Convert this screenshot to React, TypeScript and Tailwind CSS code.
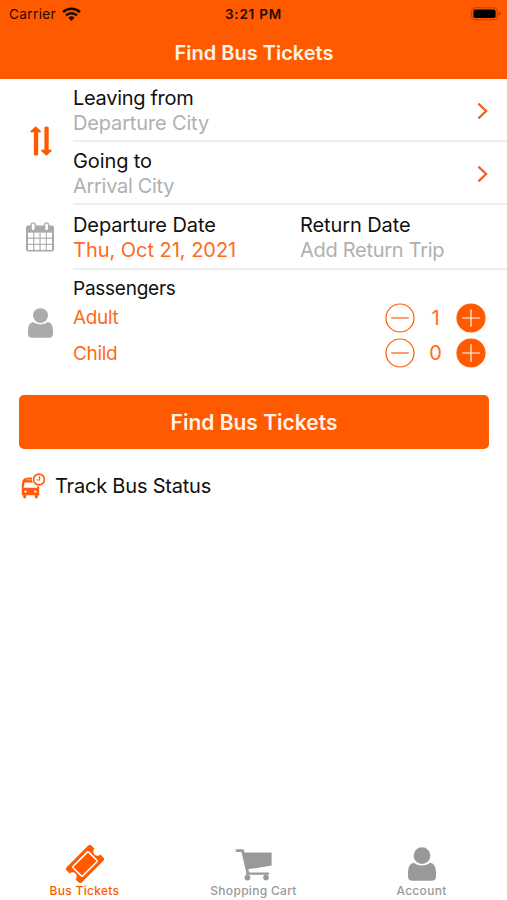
import type { ReactNode } from "react";

function WifiIcon() {
  return (
    <svg width="19" height="15" viewBox="0 0 19 15" fill="none" stroke="#1c0a00" strokeWidth="2.5">
      <path d="M1 5.2 A12.3 12.3 0 0 1 18 5.2" />
      <path d="M4 8.4 A8 8 0 0 1 15 8.4" />
      <path d="M6.4 10.8 A4.5 4.5 0 0 1 12.6 10.8 L9.5 14 Z" fill="#1c0a00" stroke="none" />
    </svg>
  );
}

function BatteryIcon() {
  return (
    <svg width="30" height="14" viewBox="0 0 30 14">
      <rect x="0.7" y="0.8" width="25.6" height="12" rx="3.4" fill="none" stroke="#b54000" strokeWidth="1" />
      <rect x="2.4" y="2.6" width="22.2" height="8.4" rx="1.8" fill="#000" />
      <path d="M27.8 4.8 Q29.6 5.2 29.6 6.8 Q29.6 8.4 27.8 8.8 Z" fill="#a83a00" />
    </svg>
  );
}

function SwapIcon() {
  return (
    <svg width="22" height="30" viewBox="0 0 22 30" fill="#ff5a00">
      <path d="M5.7 0.3 L10.9 5 Q11.2 6.8 9.6 6.6 L8.2 6.3 V28.4 Q8.2 29.6 6 29.6 Q3.9 29.6 3.9 28.4 V6.3 L2 6.6 Q0.2 6.8 0.5 5 Z" />
      <path d="M16.4 29.7 L11.2 25 Q10.9 23.2 12.5 23.4 L14.4 23.7 V1.6 Q14.4 0.4 16.6 0.4 Q18.7 0.4 18.7 1.6 V23.7 L20.1 23.4 Q21.9 23.2 21.6 25 Z" />
    </svg>
  );
}

function CalendarIcon() {
  return (
    <svg width="28" height="30" viewBox="0 0 28 30">
      <path d="M2 3.6 H26 Q28 3.6 28 5.6 V27.6 Q28 29.6 26 29.6 H2 Q0 29.6 0 27.6 V5.6 Q0 3.6 2 3.6 Z" fill="#aaa" />
      <g fill="#fff">
        {[10.6, 16.8, 22.9].map((y) =>
          [2, 8.3, 14.6, 20.8].map((x) => <rect key={`${x}-${y}`} x={x} y={y} width="5.2" height="5" />),
        )}
      </g>
      <g stroke="#aaa" strokeWidth="5.4" strokeLinecap="round">
        <path d="M7.2 3 V6" />
        <path d="M20.6 3 V6" />
      </g>
      <g stroke="#fff" strokeWidth="2.8" strokeLinecap="round">
        <path d="M7.2 3 V6.8" />
        <path d="M20.6 3 V6.8" />
      </g>
    </svg>
  );
}

function PersonIcon({ width, height, color }: { width: number; height: number; color: string }) {
  return (
    <svg width={width} height={height} viewBox="0 0 28 34" preserveAspectRatio="none" fill={color}>
      <circle cx="14" cy="8.6" r="8.4" />
      <path d="M5.6 15.8 Q9.2 18.6 14 18.6 Q18.8 18.6 22.4 15.8 Q28 17.2 28 25 V29.6 Q28 33.8 23.4 33.8 H4.6 Q0 33.8 0 29.6 V25 Q0 17.2 5.6 15.8 Z" />
    </svg>
  );
}

function Chevron() {
  return (
    <svg width="12" height="18" viewBox="0 0 12 18" fill="none" stroke="#f4611c" strokeWidth="2.2">
      <path d="M1.4 1.6 L9.2 9 L1.4 16.4" />
    </svg>
  );
}

function BusClockIcon() {
  return (
    <svg width="25" height="26" viewBox="0 0 25 26">
      <path
        d="M3.4 5.6 Q5.5 4.6 9 4.6 H13 L14 11 H17.5 L18.2 14 V22.2 H16.8 V24 Q16.8 25.4 15.3 25.4 Q13.8 25.4 13.8 24 V22.2 H5.2 V24 Q5.2 25.4 3.7 25.4 Q2.2 25.4 2.2 24 V22.2 H0.8 V13 Q0.8 7 3.4 5.6 Z"
        fill="#ff5a10"
      />
      <path d="M5 6.8 H12" stroke="#fff" strokeOpacity="0.6" strokeWidth="0.8" />
      <path d="M3.6 9.6 H13 L14.4 11.5 H15.8 L16.4 14.8 H2.6 Z" fill="#fff" />
      <circle cx="4.5" cy="18.6" r="1.2" fill="#fff" />
      <circle cx="14.4" cy="18.6" r="1.2" fill="#fff" />
      <circle cx="18" cy="6.5" r="7" fill="#fff" />
      <circle cx="18" cy="6.5" r="5.4" fill="#fff" stroke="#ff5a10" strokeWidth="1.6" />
      <path d="M18.6 3 V7 H15.6" fill="none" stroke="#ff5a10" strokeWidth="1.2" />
    </svg>
  );
}

function TicketIcon() {
  return (
    <svg width="38" height="38" viewBox="0 0 38 38">
      <g transform="translate(19 19) rotate(-45)">
        <path
          d="M-15 -10.7 H15 Q17.6 -10.7 17.6 -8 V-4.2 A4.2 4.2 0 0 0 17.6 4.2 V8 Q17.6 10.7 15 10.7 H-15 Q-17.6 10.7 -17.6 8 V4.2 A4.2 4.2 0 0 0 -17.6 -4.2 V-8 Q-17.6 -10.7 -15 -10.7 Z"
          fill="#ff5a00"
        />
        <rect x="-11" y="-6.8" width="22" height="13.6" rx="1" fill="none" stroke="#fff" strokeWidth="1.5" />
      </g>
    </svg>
  );
}

function CartIcon() {
  return (
    <svg width="38" height="32" viewBox="0 0 38 32">
      <path d="M2 1.7 H7.6 L12.8 24" fill="none" stroke="#999" strokeWidth="2.8" strokeLinecap="round" strokeLinejoin="round" />
      <path d="M8 3.6 H36.6 V16.6 L11.4 20.6 Z" fill="#999" />
      <path d="M12 24.6 H33" stroke="#999" strokeWidth="2.4" strokeLinecap="round" />
      <circle cx="12.4" cy="28.6" r="2.9" fill="#999" />
      <circle cx="31" cy="28.6" r="2.8" fill="#999" />
    </svg>
  );
}

function RoundButton({ plus = false }: { plus?: boolean }) {
  return (
    <button>
      <svg className="block" width="30" height="30" viewBox="0 0 30 30" strokeWidth="1.2">
        <circle cx="15" cy="15" r="14" fill={plus ? "#ff5a00" : "#fff"} stroke="#ff5a00" />
        <path d={plus ? "M6.2 15 H23.8 M15 6.2 V23.8" : "M6.2 15 H23.8"} stroke={plus ? "#fff" : "#ff5a00"} />
      </svg>
    </button>
  );
}

function PassengerRow({ label, count }: { label: ReactNode; count: number }) {
  return (
    <div className="flex h-[35.5px] items-center pr-[21px] text-[#ff6a1c]">
      <span className="flex-1 text-[19px] tracking-[-0.35px]">{label}</span>
      <RoundButton />
      <span className="w-[41px] pt-px text-center">{count}</span>
      <RoundButton plus />
    </div>
  );
}

function CityRow({ title, city }: { title: ReactNode; city: ReactNode }) {
  return (
    <div className="flex flex-1 items-center border-b-2 border-[#eeeeee] pt-[2px] pr-[18px]">
      <div className="flex-1">
        <div>{title}</div>
        <div className="text-[#b0b0b0]">{city}</div>
      </div>
      <Chevron />
    </div>
  );
}

export default function App() {
  return (
    <div className="flex h-[900px] w-[507px] flex-col bg-white font-['Inter','Liberation_Sans',sans-serif] text-[20px] leading-[25px] text-[#111] whitespace-nowrap">
      <header className="h-[79px] bg-[#ff5a00]">
        <div className="grid h-[27px] grid-cols-3 items-center text-[13.5px] leading-[27px] text-[#1c0a00]">
          <div className="flex items-center gap-[6px] pl-[9px]">
            <span className="pt-px tracking-[0.4px]">Carrier</span>
            <WifiIcon />
          </div>
          <div className="pt-px text-center font-semibold tracking-[0.8px]">3:21 PM</div>
          <div className="flex justify-end pr-[6px]">
            <BatteryIcon />
          </div>
        </div>
        <h1 className="pt-[13.5px] pl-px text-center font-semibold text-[#fff3e8]">Find Bus Tickets</h1>
      </header>

      <main className="flex-1">
        <section className="flex h-[126px]">
          <div className="flex w-[73px] items-center pb-[2px] pl-[30px]">
            <SwapIcon />
          </div>
          <div className="flex flex-1 flex-col">
            <CityRow
              title={<span className="tracking-[-0.3px]">Leaving from</span>}
              city={<span className="tracking-[-0.15px]">Departure City</span>}
            />
            <CityRow
              title={<span className="tracking-[-0.1px]">Going to</span>}
              city={<span className="tracking-[-0.3px]">Arrival City</span>}
            />
          </div>
        </section>

        <section className="flex h-[65px]">
          <div className="flex w-[73px] items-center pb-[2px] pl-[26px]">
            <CalendarIcon />
          </div>
          <div className="flex flex-1 border-b-2 border-[#eeeeee] pt-[8px]">
            <div className="w-[227px]">
              <div className="tracking-[-0.1px]">Departure Date</div>
              <div className="tracking-[-0.03px] text-[#ff6a1c]">Thu, Oct 21, 2021</div>
            </div>
            <div>
              <div className="tracking-[-0.1px]">Return Date</div>
              <div className="tracking-[-0.28px] text-[#b0b0b0]">Add Return Trip</div>
            </div>
          </div>
        </section>

        <section className="flex h-[125px]">
          <div className="w-[73px] pt-[38px] pl-[27.5px]">
            <PersonIcon width={25} height={30} color="#aaa" />
          </div>
          <div className="flex-1 pt-[6px]">
            <div className="h-[24px] text-[19px] tracking-[-0.25px]">Passengers</div>
            <PassengerRow label="Adult" count={1} />
            <PassengerRow label="Child" count={0} />
          </div>
        </section>

        <button className="mx-[19px] flex h-[54px] w-[470px] items-center justify-center rounded-[5px] bg-[#ff5a00] text-[21px] font-semibold text-[#fff3e8]">
          Find Bus Tickets
        </button>

        <div className="flex items-center gap-[9px] pt-[24px] pl-[21px]">
          <BusClockIcon />
          <span className="tracking-[-0.2px]">Track Bus Status</span>
        </div>
      </main>

      <nav className="grid h-[58px] grid-cols-3 text-center text-[12px] leading-[14px] font-medium tracking-[0.3px] text-[#999]">
        <div className="flex flex-col items-center text-[#ff5a00]">
          <div className="flex h-[42px] items-center pt-[1px]">
            <TicketIcon />
          </div>
          <span>Bus Tickets</span>
        </div>
        <div className="flex flex-col items-center">
          <div className="flex h-[42px] items-end pb-[3px]">
            <CartIcon />
          </div>
          <span>Shopping Cart</span>
        </div>
        <div className="flex flex-col items-center pr-[2px]">
          <div className="flex h-[42px] items-end pb-[3px]">
            <PersonIcon width={28} height={34} color="#999" />
          </div>
          <span>Account</span>
        </div>
      </nav>
    </div>
  );
}
